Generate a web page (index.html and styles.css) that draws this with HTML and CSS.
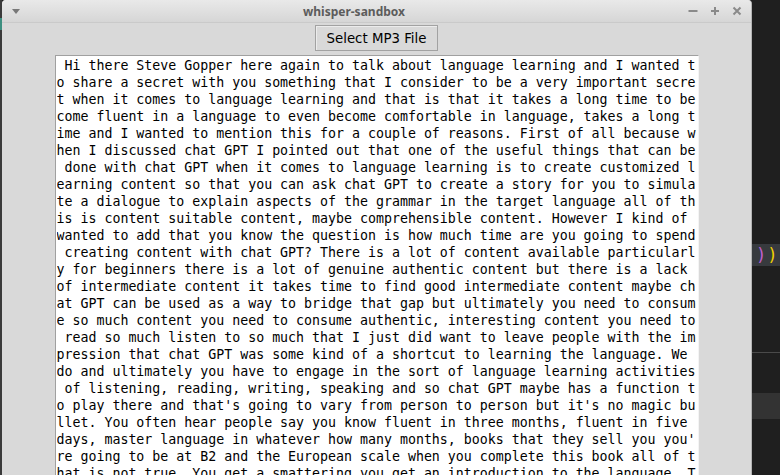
FILE: index.html
```html
<!DOCTYPE html>
<html>
<head>
<meta charset="utf-8">
<title>whisper-sandbox</title>
<link rel="stylesheet" href="styles.css">
</head>
<body>
<div class="desk">
  <div class="left-edge"><span class="teal"></span></div>
  <div class="window">
    <div class="titlebar">
      <svg class="menu" width="8" height="5" viewBox="0 0 8 5"><polygon points="0,0 8,0 4,5" fill="#787878"/></svg>
      <span class="title">whisper-sandbox</span>
      <div class="controls">
        <svg width="10" height="10" viewBox="0 0 10 10"><rect x="0.5" y="4" width="9" height="2" fill="#8a8a8a"/></svg>
        <svg width="10" height="10" viewBox="0 0 10 10"><rect x="1" y="4" width="8" height="2" fill="#8a8a8a"/><rect x="4" y="1" width="2" height="8" fill="#8a8a8a"/></svg>
        <svg width="10" height="10" viewBox="0 0 10 10"><path d="M1.5 1.5 L8.5 8.5 M8.5 1.5 L1.5 8.5" stroke="#8a8a8a" stroke-width="2"/></svg>
      </div>
    </div>
    <div class="content">
      <button class="select-btn">Select MP3 File</button>
      <div class="textbox"><pre class="transcript"> Hi there Steve Gopper here again to talk about language learning and I wanted t
o share a secret with you something that I consider to be a very important secre
t when it comes to language learning and that is that it takes a long time to be
come fluent in a language to even become comfortable in language, takes a long t
ime and I wanted to mention this for a couple of reasons. First of all because w
hen I discussed chat GPT I pointed out that one of the useful things that can be
 done with chat GPT when it comes to language learning is to create customized l
earning content so that you can ask chat GPT to create a story for you to simula
te a dialogue to explain aspects of the grammar in the target language all of th
is is content suitable content, maybe comprehensible content. However I kind of 
wanted to add that you know the question is how much time are you going to spend
 creating content with chat GPT? There is a lot of content available particularl
y for beginners there is a lot of genuine authentic content but there is a lack 
of intermediate content it takes time to find good intermediate content maybe ch
at GPT can be used as a way to bridge that gap but ultimately you need to consum
e so much content you need to consume authentic, interesting content you need to
 read so much listen to so much that I just did want to leave people with the im
pression that chat GPT was some kind of a shortcut to learning the language. We 
do and ultimately you have to engage in the sort of language learning activities
 of listening, reading, writing, speaking and so chat GPT maybe has a function t
o play there and that's going to vary from person to person but it's no magic bu
llet. You often hear people say you know fluent in three months, fluent in five 
days, master language in whatever how many months, books that they sell you you'
re going to be at B2 and the European scale when you complete this book all of t
hat is not true. You get a smattering you get an introduction to the language. T</pre></div>
    </div>
  </div>
  <div class="editor">
    <div class="code-row"><span class="p1">)</span><span class="p2">)</span></div>
    <div class="rule"></div>
    <div class="band"></div>
  </div>
</div>
</body>
</html>
```
FILE: styles.css
```css
html, body {
  margin: 0;
  padding: 0;
  height: 100%;
  overflow: hidden;
  background: #1f1f1f;
}

.desk {
  display: flex;
  height: 475px;
}

.left-edge {
  flex: 0 0 2px;
  background: #3a3a3a;
  display: flex;
  flex-direction: column;
}

.teal {
  display: block;
  margin-top: 18px;
  height: 12px;
  background: #3d8f80;
}

.window {
  flex: 0 0 750px;
  background: #d9d9d9;
  border-radius: 4px 4px 0 0;
  border-right: 1px solid #b4b4b4;
  box-sizing: border-box;
  display: flex;
  flex-direction: column;
  overflow: hidden;
}

.titlebar {
  height: 22px;
  border-bottom: 1px solid #cacaca;
  background: linear-gradient(#e9e9e9, #d6d6d6);
  display: flex;
  align-items: center;
  padding: 0 9px 0 10px;
}

.menu {
  display: block;
  flex: 0 0 auto;
  margin-top: 1px;
}

.title {
  flex: 1;
  text-align: center;
  font-family: "Noto Sans", "DejaVu Sans", sans-serif;
  font-weight: bold;
  font-size: 12px;
  color: #5c5c5c;
}

.controls {
  display: flex;
  gap: 12px;
  align-items: center;
}

.controls svg {
  display: block;
}

.content {
  display: flex;
  flex-direction: column;
  align-items: center;
  padding-top: 2px;
  flex: 1;
  min-height: 0;
}

.select-btn {
  height: 26px;
  padding: 0 11px;
  margin: 0;
  background: #d9d9d9;
  border: 1px solid #a2a2a2;
  box-shadow: inset 1px 1px 0 #ececec;
  font-family: "DejaVu Sans", sans-serif;
  font-size: 13.33px;
  color: #000;
  border-radius: 0;
}

.textbox {
  margin-top: 4px;
  width: 644px;
  flex: 1;
  box-sizing: border-box;
  background: #fff;
  border-top: 1px solid #a0a0a0;
  border-left: 1px solid #a0a0a0;
  border-right: 1px solid #f4f4f4;
  padding: 1px 1px 0 1px;
  overflow: hidden;
}

.transcript {
  margin: 0;
  font-family: "DejaVu Sans Mono", monospace;
  font-size: 13.28px;
  line-height: 17px;
  color: #000;
  white-space: pre;
  overflow: hidden;
}

.editor {
  flex: 1;
  display: flex;
  flex-direction: column;
}

.code-row {
  margin-top: 244px;
  height: 22px;
  background: #373a3e;
  font-family: "DejaVu Sans Mono", monospace;
  font-size: 17px;
  line-height: 22px;
  padding-left: 4px;
  display: flex;
  gap: 1px;
}

.p1 { color: #c060d0; }
.p2 { color: #f0d000; }

.rule {
  margin-top: 86px;
  height: 1px;
  background: #4a4a4a;
}

.band {
  margin-top: 40px;
  height: 26px;
  background: #333333;
}
```
